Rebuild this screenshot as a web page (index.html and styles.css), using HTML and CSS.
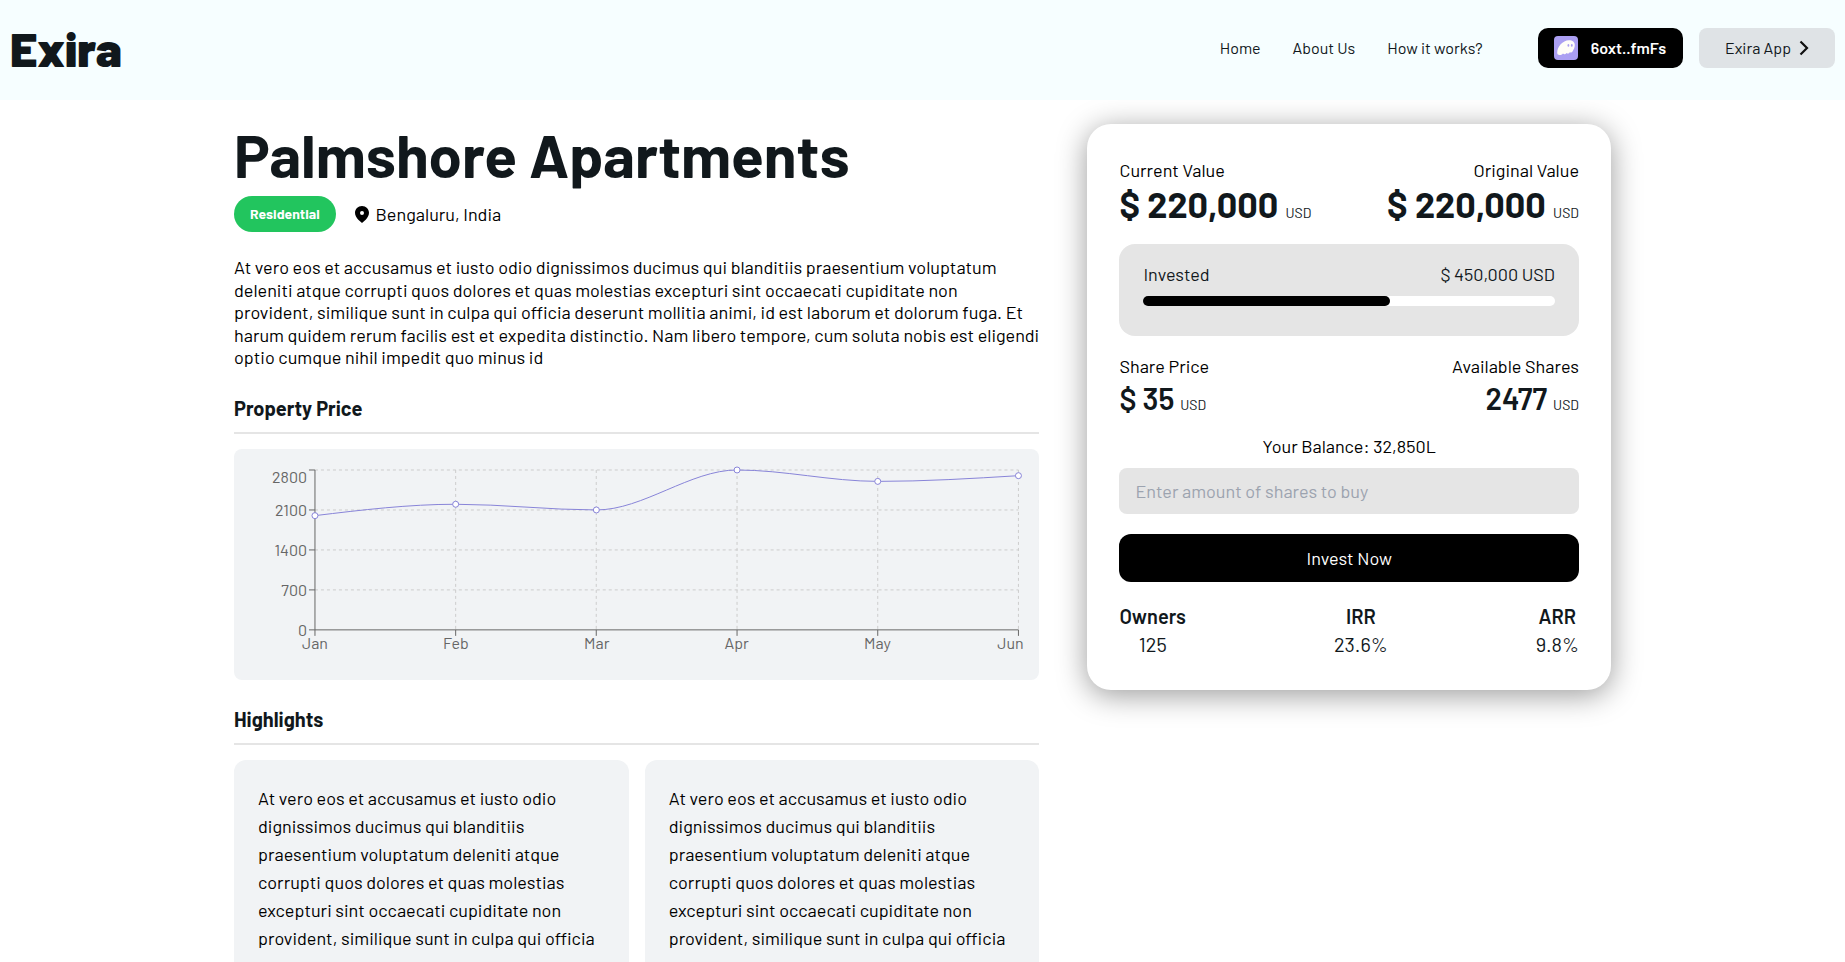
FILE: index.html
```html
<!DOCTYPE html>
<html lang="en">
<head>
<meta charset="utf-8">
<meta name="viewport" content="width=device-width, initial-scale=1">
<title>Exira - Palmshore Apartments</title>
<link rel="stylesheet" href="styles.css">
</head>
<body>
<header class="topbar">
  <a class="brand" href="#">Exira</a>
  <nav class="nav">
    <a href="#">Home</a>
    <a href="#">About Us</a>
    <a href="#">How it works?</a>
  </nav>
  <div class="actions">
    <button class="wallet" type="button">
      <svg class="wallet-icon" viewBox="0 0 24 24" aria-hidden="true">
        <rect width="24" height="24" rx="4" fill="#ab9ff2"/>
        <path d="M3.200 16.800C3.200 11 8.600 4.300 15 4.300c3.500 0 5.800 2 5.800 4.800 0 2.700-1.100 4.400-2.100 6.100-.8 1.400-2 1.600-2.800.7-.8 1.700-2.300 2.100-3.400 1-1 1.700-2.600 1.800-3.500.6-1 1.100-2.100 1.500-3.400 1.500-1.500 0-2.400-.7-2.400-2.200z" fill="#fffdf8"/>
        <ellipse cx="14.400" cy="9.400" rx=".9" ry="1.400" fill="#ab9ff2"/>
        <ellipse cx="17.800" cy="9.400" rx=".9" ry="1.400" fill="#ab9ff2"/>
      </svg>
      <span>6oxt..fmFs</span>
    </button>
    <button class="app" type="button">
      <span>Exira App</span>
      <svg class="chevron" viewBox="0 0 10 16" aria-hidden="true"><path d="M1.500 1.500L8 8l-6.500 6.500" fill="none" stroke="#111" stroke-width="2.200"/></svg>
    </button>
  </div>
</header>

<main class="layout">
  <div class="details">
    <h1 class="title">Palmshore Apartments</h1>
    <div class="meta">
      <span class="tag">Residential</span>
      <span class="place">
        <svg class="pin" viewBox="0 0 14 17" aria-hidden="true"><path fill-rule="evenodd" d="M7 0C3 0 0 3 0 6.800c0 2.900 1.600 5 3.300 6.900L7 17l3.700-3.300C12.400 11.800 14 9.700 14 6.800 14 3 11 0 7 0zm0 5a2 2 0 1 1 0 4 2 2 0 0 1 0-4z"/></svg>
        Bengaluru, India
      </span>
    </div>
    <p class="summary">At vero eos et accusamus et iusto odio dignissimos ducimus qui blanditiis praesentium voluptatum deleniti atque corrupti quos dolores et quas molestias excepturi sint occaecati cupiditate non provident, similique sunt in culpa qui officia deserunt mollitia animi, id est laborum et dolorum fuga. Et harum quidem rerum facilis est et expedita distinctio. Nam libero tempore, cum soluta nobis est eligendi optio cumque nihil impedit quo minus id</p>

    <h2 class="section-title">Property Price</h2>
    <div class="chart">
      <svg viewBox="0 0 806 232" role="img" aria-label="Property price by month">
        <g class="grid">
          <path d="M81 21H785M81 61H785M81 101H785M81 141H785"/>
          <path d="M221.800 21V181M362.500 21V181M503.400 21V181M644.200 21V181M785 21V181"/>
        </g>
        <g class="axis">
          <path d="M81 181H785M81 21V181"/>
          <path d="M75 21H81M75 61H81M75 101H81M75 141H81M75 181H81"/>
          <path d="M81 181V187M221.800 181V187M362.500 181V187M503.400 181V187M644.200 181V187M785 181V187"/>
        </g>
        <g class="ticks ticks-y">
          <text x="73" y="34">2800</text>
          <text x="73" y="67">2100</text>
          <text x="73" y="107">1400</text>
          <text x="73" y="147">700</text>
          <text x="73" y="187">0</text>
        </g>
        <g class="ticks ticks-x">
          <text x="81" y="200">Jan</text>
          <text x="222" y="200">Feb</text>
          <text x="363" y="200">Mar</text>
          <text x="503" y="200">Apr</text>
          <text x="644" y="200">May</text>
          <text x="777" y="200">Jun</text>
        </g>
        <path class="series" d="M81 66.700C127.900 61 174.900 55.300 221.800 55.300S315.700 61 362.600 61S456.500 21 503.400 21S597.300 32.400 644.200 32.400S738.100 29.600 785 26.700"/>
        <g class="dots">
          <circle cx="81" cy="66.700" r="3"/>
          <circle cx="221.800" cy="55.300" r="3"/>
          <circle cx="362.600" cy="61" r="3"/>
          <circle cx="503.400" cy="21" r="3"/>
          <circle cx="644.200" cy="32.400" r="3"/>
          <circle cx="785" cy="26.700" r="3"/>
        </g>
      </svg>
    </div>

    <h2 class="section-title">Highlights</h2>
    <div class="highlights">
      <p class="highlight">At vero eos et accusamus et iusto odio dignissimos ducimus qui blanditiis praesentium voluptatum deleniti atque corrupti quos dolores et quas molestias excepturi sint occaecati cupiditate non provident, similique sunt in culpa qui officia</p>
      <p class="highlight">At vero eos et accusamus et iusto odio dignissimos ducimus qui blanditiis praesentium voluptatum deleniti atque corrupti quos dolores et quas molestias excepturi sint occaecati cupiditate non provident, similique sunt in culpa qui officia</p>
    </div>
  </div>

  <aside class="card">
    <div class="pair">
      <div>
        <div class="label">Current Value</div>
        <div class="amount amount-lg">$ 220,000 <small>USD</small></div>
      </div>
      <div class="end">
        <div class="label">Original Value</div>
        <div class="amount amount-lg">$ 220,000 <small>USD</small></div>
      </div>
    </div>
    <div class="invested">
      <div class="invested-row"><span>Invested</span><span>$ 450,000 USD</span></div>
      <div class="track"><div class="fill" style="width:60%"></div></div>
    </div>
    <div class="pair">
      <div>
        <div class="label">Share Price</div>
        <div class="amount">$ 35 <small>USD</small></div>
      </div>
      <div class="end">
        <div class="label">Available Shares</div>
        <div class="amount">2477 <small>USD</small></div>
      </div>
    </div>
    <form class="buy">
      <label class="balance" for="shares">Your Balance: 32,850L</label>
      <input class="shares" id="shares" type="text" placeholder="Enter amount of shares to buy">
      <button class="invest" type="button">Invest Now</button>
    </form>
    <dl class="stats">
      <div><dt>Owners</dt><dd>125</dd></div>
      <div><dt>IRR</dt><dd>23.6%</dd></div>
      <div><dt>ARR</dt><dd>9.8%</dd></div>
    </dl>
  </aside>
</main>
</body>
</html>
```

FILE: styles.css
```css
*, *::before, *::after { box-sizing: border-box; }

body {
  margin: 0;
  height: 100vh;
  overflow: hidden;
  background: #fff;
  color: #000;
  font-family: Barlow, Roboto, "Liberation Sans", sans-serif;
  font-size: 18px;
  line-height: 28px;
}

h1, h2, p, dl, dd { margin: 0; }
a { color: inherit; text-decoration: none; }
button, input { font: inherit; border: 0; }
button { cursor: pointer; }

.topbar {
  position: relative;
  z-index: 1;
  display: flex;
  align-items: center;
  height: 100px;
  padding: 0 10px 4px;
  background: #f6feff;
  color: #11181c;
}
.brand { margin-right: auto; font-size: 48px; line-height: 60px; font-weight: 900; }
.nav { display: flex; gap: 32px; margin-right: 55px; font-size: 16px; line-height: 24px; }
.actions { display: flex; gap: 16px; }
.wallet, .app {
  display: flex;
  align-items: center;
  height: 40px;
  font-size: 16px;
}
.wallet { gap: 13px; padding: 0 17px 0 16px; border-radius: 10px; background: #000; color: #fff; font-weight: 600; }
.wallet-icon { width: 24px; height: 24px; }
.app { gap: 8px; padding: 0 26px; border-radius: 8px; background: #dfe3e6; color: #11181c; }
.chevron { width: 10px; height: 16px; }

.layout {
  display: grid;
  grid-template-columns: minmax(0, 20fr) minmax(0, 13fr);
  align-items: start;
  gap: 48px;
  max-width: 1441px;
  margin: 0 auto;
  padding: 24px 32px;
}

.title { margin-bottom: 12px; font-size: 60px; line-height: 60px; font-weight: 700; color: #11181c; }
.meta { display: flex; align-items: center; gap: 19px; }
.tag {
  padding: 0 16px;
  border-radius: 18px;
  background: #22c55e;
  color: #fff;
  font-size: 14px;
  line-height: 36px;
  font-weight: 700;
}
.place { display: flex; align-items: center; gap: 7px; }
.pin { width: 14px; height: 17px; }
.summary { margin-top: 24px; line-height: 1.25; }

.section-title {
  margin: 25px 0 15px;
  padding-bottom: 10px;
  border-bottom: 2px solid #e5e5e5;
  color: #11181c;
  font-size: 20px;
  line-height: 28px;
  font-weight: 700;
}
.chart { border-radius: 8px; background: #f1f3f5; }
.chart svg { display: block; width: 100%; }
.grid { fill: none; stroke: #ccc; stroke-dasharray: 3 3; }
.axis { fill: none; stroke: #666; }
.ticks { fill: #666; font-size: 16px; }
.ticks-y { text-anchor: end; }
.ticks-x { text-anchor: middle; }
.series { fill: none; stroke: #8884d8; }
.dots { fill: #fff; stroke: #8884d8; }

.highlights { display: grid; grid-template-columns: 1fr 1fr; gap: 16px; }
.highlight { padding: 24px 24px 40px; border-radius: 12px; background: #f1f3f5; }

.card {
  padding: 32px;
  border-radius: 24px;
  background: #fff;
  box-shadow: 0 5px 30px rgba(0, 0, 0, .4);
}
.pair { display: flex; justify-content: space-between; }
.end { text-align: right; }
.amount { color: #11181c; font-size: 30px; line-height: 36px; font-weight: 600; }
.amount-lg { margin-bottom: 4px; font-size: 36px; line-height: 40px; font-weight: 700; }
.amount small { font-size: 14px; line-height: 1; font-weight: 400; }
.invested { margin: 16px 0; padding: 16px 24px 30px; border-radius: 16px; background: #e5e5e5; }
.invested-row { display: flex; justify-content: space-between; margin-bottom: 8px; color: #11181c; }
.track { height: 10px; border-radius: 5px; background: #fff; }
.fill { height: 100%; border-radius: 5px; background: #000; }
.buy { display: flex; flex-direction: column; margin-top: 16px; }
.balance { align-self: center; margin-bottom: 8px; }
.shares { width: 100%; height: 46px; padding: 0 16px; border-radius: 8px; background: #e5e5e5; }
.shares::placeholder { color: #9ca3af; opacity: 1; }
.invest { height: 48px; margin-top: 20px; border-radius: 12px; background: #000; color: #fff; }
.stats { display: flex; justify-content: space-between; margin-top: 20px; color: #11181c; font-size: 20px; text-align: center; }
.stats dt { font-weight: 600; }
```
